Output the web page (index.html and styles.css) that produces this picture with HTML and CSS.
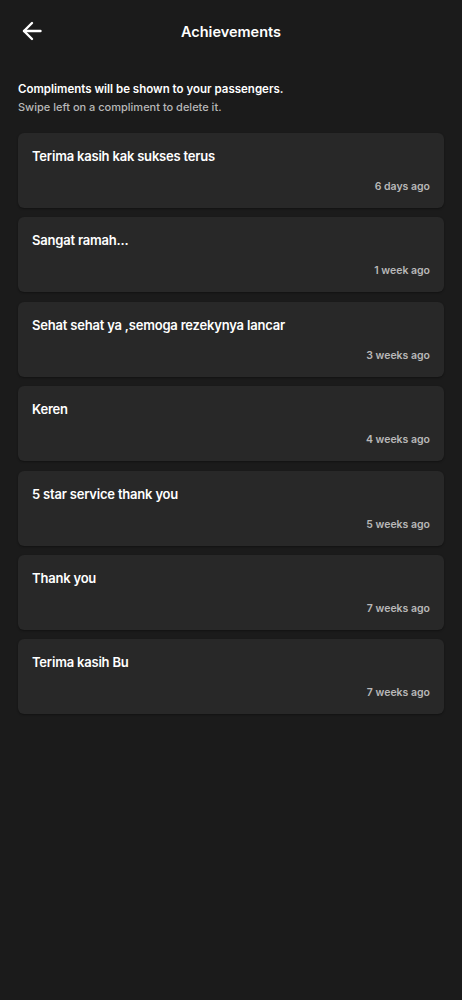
FILE: index.html
```html
<!DOCTYPE html>
<html lang="en">
<head>
    <meta charset="UTF-8">
    <meta name="viewport" content="width=device-width, initial-scale=1.0">
    <title>Achievements</title>
    <link rel="stylesheet" href="styles.css">
</head>
<body>
<header class="top-bar">
    <button class="back-button" aria-label="Back">
        <svg width="20" height="20" viewBox="0 0 20 20" fill="none" stroke="currentColor" stroke-width="2.4" stroke-linecap="round" stroke-linejoin="round">
            <path d="M18.5 10H2"/>
            <path d="M10 2L2 10l8 8"/>
        </svg>
    </button>
    <h1>Achievements</h1>
</header>

<section class="intro">
    <p class="intro-title">Compliments will be shown to your passengers.</p>
    <p class="intro-hint">Swipe left on a compliment to delete it.</p>
</section>

<ul class="compliment-list">
    <li class="compliment-card">
        <p class="compliment-text">Terima kasih kak sukses terus</p>
        <span class="compliment-date">6 days ago</span>
    </li>
    <li class="compliment-card">
        <p class="compliment-text">Sangat ramah...</p>
        <span class="compliment-date">1 week ago</span>
    </li>
    <li class="compliment-card">
        <p class="compliment-text">Sehat sehat ya ,semoga rezekynya lancar</p>
        <span class="compliment-date">3 weeks ago</span>
    </li>
    <li class="compliment-card">
        <p class="compliment-text">Keren</p>
        <span class="compliment-date">4 weeks ago</span>
    </li>
    <li class="compliment-card">
        <p class="compliment-text">5 star service thank you</p>
        <span class="compliment-date">5 weeks ago</span>
    </li>
    <li class="compliment-card">
        <p class="compliment-text">Thank you</p>
        <span class="compliment-date">7 weeks ago</span>
    </li>
    <li class="compliment-card">
        <p class="compliment-text">Terima kasih Bu</p>
        <span class="compliment-date">7 weeks ago</span>
    </li>
</ul>
</body>
</html>
```

FILE: styles.css
```css
:root {
    --background: #1b1b1b;
    --card: #282828;
    --text: #ffffff;
    --text-secondary: #b8b8b8;
}

* {
    margin: 0;
    padding: 0;
    box-sizing: border-box;
}

body {
    font-family: Inter, 'Noto Sans', Arial, sans-serif;
    background-color: var(--background);
    color: var(--text);
    min-height: 100vh;
    padding: 0 18px;
}

.top-bar {
    position: relative;
    display: flex;
    justify-content: center;
    align-items: center;
    height: 62px;
}

.back-button {
    position: absolute;
    left: 4px;
    top: 21px;
    display: flex;
    background: none;
    border: none;
    color: var(--text);
    cursor: pointer;
}

.top-bar h1 {
    font-size: 14.5px;
    font-weight: 600;
}

.intro {
    padding-top: 18px;
    margin-bottom: 17px;
}

.intro-title {
    font-size: 11.5px;
    font-weight: 600;
    line-height: 18px;
}

.intro-hint {
    font-size: 11px;
    font-weight: 500;
    line-height: 18px;
    color: var(--text-secondary);
}

.compliment-list {
    list-style: none;
    display: flex;
    flex-direction: column;
    gap: 9.4px;
}

.compliment-card {
    display: flex;
    flex-direction: column;
    gap: 13px;
    padding: 13px 14px;
    background-color: var(--card);
    border-radius: 6px;
    box-shadow: 0 1px 2px rgba(0, 0, 0, 0.35);
}

.compliment-text {
    font-size: 13px;
    font-weight: 600;
    line-height: 20px;
    letter-spacing: -0.2px;
}

.compliment-date {
    align-self: flex-end;
    font-size: 10.5px;
    font-weight: 600;
    line-height: 16px;
    color: var(--text-secondary);
}
```
